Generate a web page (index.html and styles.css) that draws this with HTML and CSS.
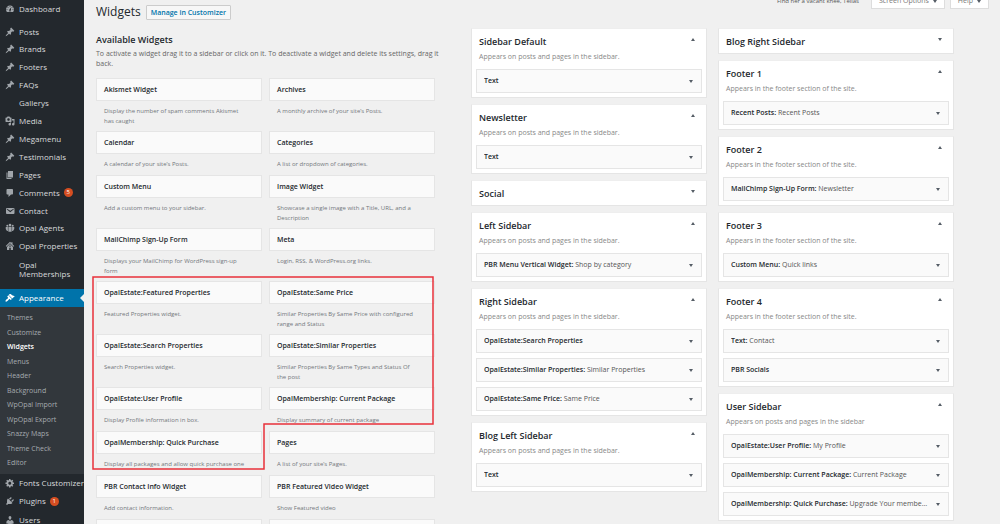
FILE: index.html
```html
<!DOCTYPE html>
<html lang="en">
<head>
<meta charset="utf-8">
<title>Widgets</title>
<link rel="stylesheet" href="styles.css">
</head>
<body>
<svg class="sprite" aria-hidden="true">
  <symbol id="i-dash" viewBox="0 0 20 20"><path fill-rule="evenodd" d="M3.76 16h12.48c1.1-1.37 1.76-3.11 1.76-5 0-4.42-3.58-8-8-8s-8 3.58-8 8c0 1.89.66 3.63 1.76 5zM10 4c.55 0 1 .45 1 1s-.45 1-1 1-1-.45-1-1 .45-1 1-1zM6 6c.55 0 1 .45 1 1s-.45 1-1 1-1-.45-1-1 .45-1 1-1zm8 0c.55 0 1 .45 1 1s-.45 1-1 1-1-.45-1-1 .45-1 1-1zm-5.37 5.55L12 7v6c0 1.1-.9 2-2 2s-2-.9-2-2c0-.57.24-1.08.63-1.45zM4 10c.55 0 1 .45 1 1s-.45 1-1 1-1-.45-1-1 .45-1 1-1zm12 0c.55 0 1 .45 1 1s-.45 1-1 1-1-.45-1-1 .45-1 1-1zm-5 3c0-.55-.45-1-1-1s-1 .45-1 1 .45 1 1 1 1-.45 1-1z"/></symbol>
  <symbol id="i-pin" viewBox="0 0 20 20"><path d="M10.44 3.02l1.82-1.82 6.36 6.35-1.83 1.82c-1.05-.68-2.48-.57-3.41.36l-.75.75c-.92.93-1.04 2.35-.35 3.41l-1.83 1.82-2.41-2.41-2.8 2.79c-.42.42-3.38 2.71-3.8 2.29s1.86-3.39 2.28-3.81l2.79-2.79L4.1 9.36l1.83-1.82c1.05.69 2.48.57 3.4-.36l.75-.75c.93-.92 1.05-2.35.36-3.41z"/></symbol>
  <symbol id="i-media" viewBox="0 0 20 20"><path fill-rule="evenodd" d="M13 11V4c0-.55-.45-1-1-1h-1.67L9 1H5L3.67 3H2c-.55 0-1 .45-1 1v7c0 .55.45 1 1 1h10c.55 0 1-.45 1-1zM7 4.5c1.38 0 2.5 1.12 2.5 2.5S8.38 9.5 7 9.5 4.5 8.38 4.5 7 5.62 4.5 7 4.5zM14 6h5v10.5c0 1.38-1.12 2.5-2.5 2.5S14 17.88 14 16.5s1.12-2.5 2.5-2.5c.17 0 .34.02.5.05V9h-3V6zm-4 8.05V13h2v3.5c0 1.38-1.12 2.5-2.5 2.5S7 17.88 7 16.5 8.12 14 9.5 14c.17 0 .34.02.5.05z"/></symbol>
  <symbol id="i-page" viewBox="0 0 20 20"><path d="M6 15V2h10v13H6zm-1 1h8v2H3V5h2v11z"/></symbol>
  <symbol id="i-comment" viewBox="0 0 20 20"><path d="M5 2h9c1.1 0 2 .9 2 2v7c0 1.1-.9 2-2 2h-2l-5 5v-5H5c-1.1 0-2-.9-2-2V4c0-1.1.9-2 2-2z"/></symbol>
  <symbol id="i-mail" viewBox="0 0 20 20"><path fill-rule="evenodd" d="M3.87 4h13.25C18.37 4 19 4.59 19 5.79v8.42c0 1.19-.63 1.79-1.88 1.79H3.87c-1.25 0-1.88-.6-1.88-1.79V5.79c0-1.2.63-1.79 1.88-1.79zm6.62 8.6l6.74-5.53c.24-.2.43-.66.13-1.07-.29-.41-.82-.42-1.17-.17l-5.7 3.86L4.8 5.83c-.35-.25-.88-.24-1.17.17-.3.41-.11.87.13 1.07z"/></symbol>
  <symbol id="i-group" viewBox="0 0 20 20"><circle cx="10" cy="4" r="2.6"/><circle cx="4.6" cy="5.4" r="2"/><circle cx="15.4" cy="5.4" r="2"/><path d="M6.8 7.6h6.4v10H6.800zM1.500 8.200h4.300v7.800H4L1.500 12zM14.200 8.200h4.300V12L16 16h-1.800z"/></symbol>
  <symbol id="i-home" viewBox="0 0 20 20"><path fill-rule="evenodd" d="M10 1.500l2.500 2.500V2.500H15v4l3.500 3.500-1.300 1.300L10 4.300l-7.200 7L1.500 10zM10 6l6 5.800V18h-4.500v-4.500h-3V18H4v-6.200zM8.800 9.200v2.200h2.400V9.200z"/></symbol>
  <symbol id="i-brush" viewBox="0 0 20 20"><path d="M14.480 11.060L7.410 3.990l1.500-1.500c.5-.56 2.300-.47 3.510.32 1.210.8 1.430 1.280 2.910 2.100 1.180.64 2.450 1.260 4.450.85zm-.71.71L6.700 4.700 4.930 6.470c-.39.39-.39 1.020 0 1.410l1.060 1.060c.39.39.39 1.030 0 1.420-.6.6-1.430 1.110-2.210 1.690-.35.26-.7.53-1.010.84C1.430 14.230.4 16.080 1.400 17.070c.99 1 2.840-.03 4.180-1.360.31-.31.58-.66.85-1.020.57-.78 1.080-1.610 1.690-2.210.39-.39 1.020-.39 1.410 0l1.060 1.060c.39.39 1.020.39 1.410 0z"/></symbol>
  <symbol id="i-gear" viewBox="0 0 20 20"><path fill-rule="evenodd" d="M18 12h-2.180c-.17.7-.44 1.350-.81 1.930l1.540 1.540-2.100 2.100-1.540-1.540c-.58.36-1.230.63-1.910.79V19H8v-2.180c-.68-.16-1.330-.43-1.910-.79l-1.540 1.540-2.120-2.120 1.540-1.540c-.36-.58-.63-1.230-.79-1.910H1V9.030h2.170c.16-.7.44-1.350.8-1.940L2.430 5.550l2.100-2.100 1.540 1.540c.58-.37 1.240-.64 1.930-.81V2h3v2.180c.68.16 1.330.43 1.910.79l1.540-1.540 2.120 2.120-1.540 1.540c.36.59.64 1.240.8 1.940H18V12zm-8.500 1.500c1.660 0 3-1.340 3-3s-1.340-3-3-3-3 1.340-3 3 1.340 3 3 3z"/></symbol>
  <symbol id="i-plug" viewBox="0 0 20 20"><path d="M13.110 4.360L9.870 7.600 8 5.730l3.240-3.240c.35-.34 1.050-.2 1.560.32.52.51.66 1.210.31 1.550zm-8 1.770l.91-1.120 9.010 9.010-1.190.84c-.71.71-2.630 1.160-3.820 1.160H6.140L4.900 17.260c-.59.59-1.540.59-2.120 0-.59-.58-.59-1.530 0-2.120l1.240-1.240v-3.880c0-1.130.4-3.190 1.090-3.890zm7.260 3.970l3.240-3.240c.34-.35 1.040-.21 1.550.31.52.51.66 1.210.31 1.550l-3.240 3.250z"/></symbol>
  <symbol id="i-user" viewBox="0 0 20 20"><path d="M10 9.250c-2.270 0-2.730-3.440-2.730-3.440C7 4.020 7.820 2 9.970 2c2.160 0 2.980 2.020 2.710 3.810 0 0-.41 3.440-2.680 3.440zm0 2.570L12.720 10c2.390 0 4.520 2.330 4.520 4.530v2.490s-3.650 1.130-7.240 1.130c-3.650 0-7.240-1.130-7.240-1.130v-2.490c0-2.250 1.940-4.480 4.470-4.480z"/></symbol>
</svg>
<nav class="menu" aria-label="Admin menu">
  <ul class="menu-list menu-top">
    <li><a href="#"><svg class="icon"><use href="#i-dash"/></svg>Dashboard</a></li>
  </ul>
  <ul class="menu-list menu-main">
    <li><a href="#"><svg class="icon"><use href="#i-pin"/></svg>Posts</a></li>
    <li><a href="#"><svg class="icon"><use href="#i-pin"/></svg>Brands</a></li>
    <li><a href="#"><svg class="icon"><use href="#i-pin"/></svg>Footers</a></li>
    <li><a href="#"><svg class="icon"><use href="#i-pin"/></svg>FAQs</a></li>
    <li><a href="#"><span class="icon"></span>Gallerys</a></li>
    <li><a href="#"><svg class="icon"><use href="#i-media"/></svg>Media</a></li>
    <li><a href="#"><svg class="icon"><use href="#i-pin"/></svg>Megamenu</a></li>
    <li><a href="#"><svg class="icon"><use href="#i-pin"/></svg>Testimonials</a></li>
    <li><a href="#"><svg class="icon"><use href="#i-page"/></svg>Pages</a></li>
    <li><a href="#"><svg class="icon"><use href="#i-comment"/></svg>Comments<span class="badge">5</span></a></li>
    <li><a href="#"><svg class="icon"><use href="#i-mail"/></svg>Contact</a></li>
    <li><a href="#"><svg class="icon"><use href="#i-group"/></svg>Opal Agents</a></li>
    <li><a href="#"><svg class="icon"><use href="#i-home"/></svg>Opal Properties</a></li>
  </ul>
  <ul class="menu-list menu-extra">
    <li><a href="#"><span class="icon"></span><span>Opal Memberships</span></a></li>
  </ul>
  <a class="current" href="#"><svg class="icon"><use href="#i-brush"/></svg>Appearance</a>
  <ul class="submenu">
    <li><a href="#">Themes</a></li>
    <li><a href="#">Customize</a></li>
    <li><a class="on" href="#">Widgets</a></li>
    <li><a href="#">Menus</a></li>
    <li><a href="#">Header</a></li>
    <li><a href="#">Background</a></li>
    <li><a href="#">WpOpal Import</a></li>
    <li><a href="#">WpOpal Export</a></li>
    <li><a href="#">Snazzy Maps</a></li>
    <li><a href="#">Theme Check</a></li>
    <li><a href="#">Editor</a></li>
  </ul>
  <ul class="menu-list menu-end">
    <li><a href="#"><svg class="icon"><use href="#i-gear"/></svg>Fonts Customizer</a></li>
    <li><a href="#"><svg class="icon"><use href="#i-plug"/></svg>Plugins<span class="badge">1</span></a></li>
    <li><a href="#"><svg class="icon"><use href="#i-user"/></svg>Users</a></li>
  </ul>
</nav>
<main class="content">
  <header class="head">
    <h1>Widgets</h1>
    <a class="customize" href="#">Manage in Customizer</a>
    <div class="meta">
      <p class="lyric">Find her a vacant knee, Tellas</p>
      <button class="tab" type="button">Screen Options <span class="caret down"></span></button>
      <button class="tab" type="button">Help <span class="caret down"></span></button>
    </div>
  </header>
  <div class="columns">
    <section class="available">
      <h2>Available Widgets</h2>
      <p class="intro">To activate a widget drag it to a sidebar or click on it. To deactivate a widget and delete its settings, drag it back.</p>
      <div class="catalog">
        <article><h3>Akismet Widget</h3><p>Display the number of spam comments Akismet has caught</p></article>
        <article><h3>Archives</h3><p>A monthly archive of your site’s Posts.</p></article>
        <article><h3>Calendar</h3><p>A calendar of your site’s Posts.</p></article>
        <article><h3>Categories</h3><p>A list or dropdown of categories.</p></article>
        <article><h3>Custom Menu</h3><p>Add a custom menu to your sidebar.</p></article>
        <article><h3>Image Widget</h3><p>Showcase a single image with a Title, URL, and a Description</p></article>
        <article><h3>MailChimp Sign-Up Form</h3><p>Displays your MailChimp for WordPress sign-up form</p></article>
        <article><h3>Meta</h3><p>Login, RSS, &amp; WordPress.org links.</p></article>
        <article><h3>OpalEstate:Featured Properties</h3><p>Featured Properties widget.</p></article>
        <article><h3>OpalEstate:Same Price</h3><p>Similar Properties By Same Price with configured range and Status</p></article>
        <article><h3>OpalEstate:Search Properties</h3><p>Search Properties widget.</p></article>
        <article><h3>OpalEstate:Similar Properties</h3><p>Similar Properties By Same Types and Status Of the post</p></article>
        <article><h3>OpalEstate:User Profile</h3><p>Display Profile information in box.</p></article>
        <article><h3>OpalMembership: Current Package</h3><p>Display summary of current package</p></article>
        <article><h3>OpalMembership: Quick Purchase</h3><p>Display all packages and allow quick purchase one</p></article>
        <article><h3>Pages</h3><p>A list of your site’s Pages.</p></article>
        <article><h3>PBR Contact Info Widget</h3><p>Add contact information.</p></article>
        <article><h3>PBR Featured Video Widget</h3><p>Show Featured video</p></article>
        <article><h3></h3></article>
        <article><h3></h3></article>
      </div>
      <svg class="outline" viewBox="0 0 342 194" aria-hidden="true"><path d="M1 1H341V148H172V193H1Z"/></svg>
    </section>
    <div class="areas">
      <div class="area-col">
        <section class="area"><header><h2>Sidebar Default</h2><button type="button" aria-label="Collapse Sidebar Default"><span class="caret up"></span></button></header><p>Appears on posts and pages in the sidebar.</p>
          <button class="item" type="button"><span><b>Text</b></span><i class="caret down"></i></button></section>
        <section class="area"><header><h2>Newsletter</h2><button type="button" aria-label="Collapse Newsletter"><span class="caret up"></span></button></header><p>Appears on posts and pages in the sidebar.</p>
          <button class="item" type="button"><span><b>Text</b></span><i class="caret down"></i></button></section>
        <section class="area closed"><header><h2>Social</h2><button type="button" aria-label="Expand Social"><span class="caret down"></span></button></header></section>
        <section class="area"><header><h2>Left Sidebar</h2><button type="button" aria-label="Collapse Left Sidebar"><span class="caret up"></span></button></header><p>Appears on posts and pages in the sidebar.</p>
          <button class="item" type="button"><span><b>PBR Menu Vertical Widget:</b> Shop by category</span><i class="caret down"></i></button></section>
        <section class="area"><header><h2>Right Sidebar</h2><button type="button" aria-label="Collapse Right Sidebar"><span class="caret up"></span></button></header><p>Appears on posts and pages in the sidebar.</p>
          <button class="item" type="button"><span><b>OpalEstate:Search Properties</b></span><i class="caret down"></i></button>
          <button class="item" type="button"><span><b>OpalEstate:Similar Properties:</b> Similar Properties</span><i class="caret down"></i></button>
          <button class="item" type="button"><span><b>OpalEstate:Same Price:</b> Same Price</span><i class="caret down"></i></button></section>
        <section class="area"><header><h2>Blog Left Sidebar</h2><button type="button" aria-label="Collapse Blog Left Sidebar"><span class="caret up"></span></button></header><p>Appears on posts and pages in the sidebar.</p>
          <button class="item" type="button"><span><b>Text</b></span><i class="caret down"></i></button></section>
      </div>
      <div class="area-col">
        <section class="area closed"><header><h2>Blog Right Sidebar</h2><button type="button" aria-label="Expand Blog Right Sidebar"><span class="caret down"></span></button></header></section>
        <section class="area"><header><h2>Footer 1</h2><button type="button" aria-label="Collapse Footer 1"><span class="caret up"></span></button></header><p>Appears in the footer section of the site.</p>
          <button class="item" type="button"><span><b>Recent Posts:</b> Recent Posts</span><i class="caret down"></i></button></section>
        <section class="area"><header><h2>Footer 2</h2><button type="button" aria-label="Collapse Footer 2"><span class="caret up"></span></button></header><p>Appears in the footer section of the site.</p>
          <button class="item" type="button"><span><b>MailChimp Sign-Up Form:</b> Newsletter</span><i class="caret down"></i></button></section>
        <section class="area"><header><h2>Footer 3</h2><button type="button" aria-label="Collapse Footer 3"><span class="caret up"></span></button></header><p>Appears in the footer section of the site.</p>
          <button class="item" type="button"><span><b>Custom Menu:</b> Quick links</span><i class="caret down"></i></button></section>
        <section class="area"><header><h2>Footer 4</h2><button type="button" aria-label="Collapse Footer 4"><span class="caret up"></span></button></header><p>Appears in the footer section of the site.</p>
          <button class="item" type="button"><span><b>Text:</b> Contact</span><i class="caret down"></i></button>
          <button class="item" type="button"><span><b>PBR Socials</b></span><i class="caret down"></i></button></section>
        <section class="area"><header><h2>User Sidebar</h2><button type="button" aria-label="Collapse User Sidebar"><span class="caret up"></span></button></header><p>Appears on posts and pages in the sidebar</p>
          <button class="item" type="button"><span><b>OpalEstate:User Profile:</b> My Profile</span><i class="caret down"></i></button>
          <button class="item" type="button"><span><b>OpalMembership: Current Package:</b> Current Package</span><i class="caret down"></i></button>
          <button class="item" type="button"><span><b>OpalMembership: Quick Purchase:</b> Upgrade Your membership</span><i class="caret down"></i></button></section>
      </div>
    </div>
  </div>
</main>
</body>
</html>
```

FILE: styles.css
```css
* { box-sizing: border-box; margin: 0; padding: 0; }
body {
  display: flex;
  height: 100vh;
  overflow: hidden;
  background: #f0f0f0;
  color: #23282d;
  font: 7px/10px "Open Sans", "Noto Sans", sans-serif;
}
button { font: inherit; color: inherit; background: none; border: 0; }
a { color: inherit; text-decoration: none; }
ul { list-style: none; }
.sprite { position: absolute; width: 0; height: 0; }

/* Admin menu */
.menu { flex: 0 0 84px; background: #23282d; color: #d8dadc; font-size: 8px; }
.menu-list { display: flex; flex-direction: column; justify-content: space-between; }
.menu-list a, .current { display: flex; align-items: center; min-height: 17px; padding-left: 5px; white-space: nowrap; }
.icon { flex: none; width: 10px; height: 10px; margin-right: 4px; fill: #a0a5aa; }
.menu-main { min-height: 232px; margin-top: 6px; }
.menu-list.menu-extra a { min-height: 34px; padding: 0 12px 6px 5px; line-height: 9px; white-space: normal; }
.badge { margin-left: 4px; width: 9px; height: 9px; border-radius: 50%; background: #d54e21; color: #fff; font-size: 6px; line-height: 9px; text-align: center; }
.current { position: relative; min-height: 18px; background: #0073aa; color: #fff; }
.current .icon { fill: #fff; }
.current::after { content: ""; position: absolute; right: 0; top: 5px; border: 4px solid transparent; border-left: 0; border-right-color: #f0f0f0; }
.submenu { display: flex; flex-direction: column; justify-content: space-between; min-height: 167px; padding: 4px 0 4px 7px; background: #32373c; color: #a6abb0; font-size: 7px; line-height: 14px; }
.submenu .on { color: #fff; font-weight: 600; }
.menu-end { min-height: 54px; }

/* Page head */
.content { flex: 1; min-width: 0; padding-left: 12px; }
.head { display: flex; align-items: flex-start; height: 28px; padding-right: 11px; }
h1 { margin: 4px 5px 0 0; font-size: 12px; line-height: 16px; font-weight: 400; }
.customize { margin-top: 5px; padding: 0 4px; border: 1px solid #ccc; border-radius: 1px; background: #f7f7f7; color: #0073aa; font-weight: 600; line-height: 13px; }
.meta { display: flex; align-items: flex-end; gap: 5px; height: 9px; margin-left: auto; overflow: hidden; color: #555; }
.lyric { margin-right: 7px; font-size: 6px; line-height: 16px; }
.tab { display: flex; align-items: center; gap: 4px; height: 15px; padding: 0 7px; background: #fff; border: 1px solid #ddd; border-top: 0; color: #777; }

.caret { flex: none; display: inline-block; width: 0; height: 0; border: 2px solid transparent; color: #555d66; }
.caret.down { border-top: 3px solid; border-bottom: 0; border-left-color: transparent; border-right-color: transparent; }
.caret.up { border-bottom: 3px solid; border-top: 0; border-left-color: transparent; border-right-color: transparent; }

/* Columns */
.columns { display: flex; gap: 36px; padding-right: 46px; }
.available { position: relative; flex: 339 1 0; min-width: 0; }
.available h2 { padding-top: 6px; font-size: 9px; line-height: 12px; font-weight: 600; }
.intro { margin: 3px -12px 9px 0; color: #666; }
.catalog { display: grid; grid-template-columns: 1fr 1fr; column-gap: 7px; }
.catalog article { min-height: 44px; padding-bottom: 5px; }
.catalog h3 { height: 23px; padding-left: 7px; border: 1px solid #e5e5e5; background: #fafafa; font-size: 7px; line-height: 21px; font-weight: 600; }
.catalog p { padding: 5px 16px 0 8px; color: #72777c; font-size: 6px; }
.outline { position: absolute; left: -4px; top: 248px; width: 342px; height: 194px; fill: none; stroke: #e8303a; stroke-width: 1.5; }

/* Sidebar areas */
.areas { flex: 483 1 0; min-width: 0; display: grid; grid-template-columns: 1fr 1fr; gap: 11px; align-items: start; }
.area-col { display: grid; gap: 6px; min-width: 0; }
.area { min-width: 0; padding: 0 4px 4px; background: #fff; border: 1px solid #e5e5e5; border-top-color: #eee; }
.area header { display: flex; justify-content: space-between; padding: 6px 7px 0 3px; }
.area h2 { font-size: 9px; line-height: 14px; font-weight: 600; }
.area header button { display: flex; padding-top: 3px; height: 10px; }
.area > p { padding: 3px 3px 7px; color: #888; }
.item { display: flex; align-items: center; justify-content: space-between; width: 100%; height: 24px; padding: 0 8px 0 7px; border: 1px solid #e5e5e5; background: #fafafa; color: #555; text-align: left; }
.item + .item { margin-top: 5px; }
.item span { min-width: 0; padding-right: 8px; overflow: hidden; white-space: nowrap; text-overflow: ellipsis; }
.item b { color: #23282d; font-weight: 600; }
```
